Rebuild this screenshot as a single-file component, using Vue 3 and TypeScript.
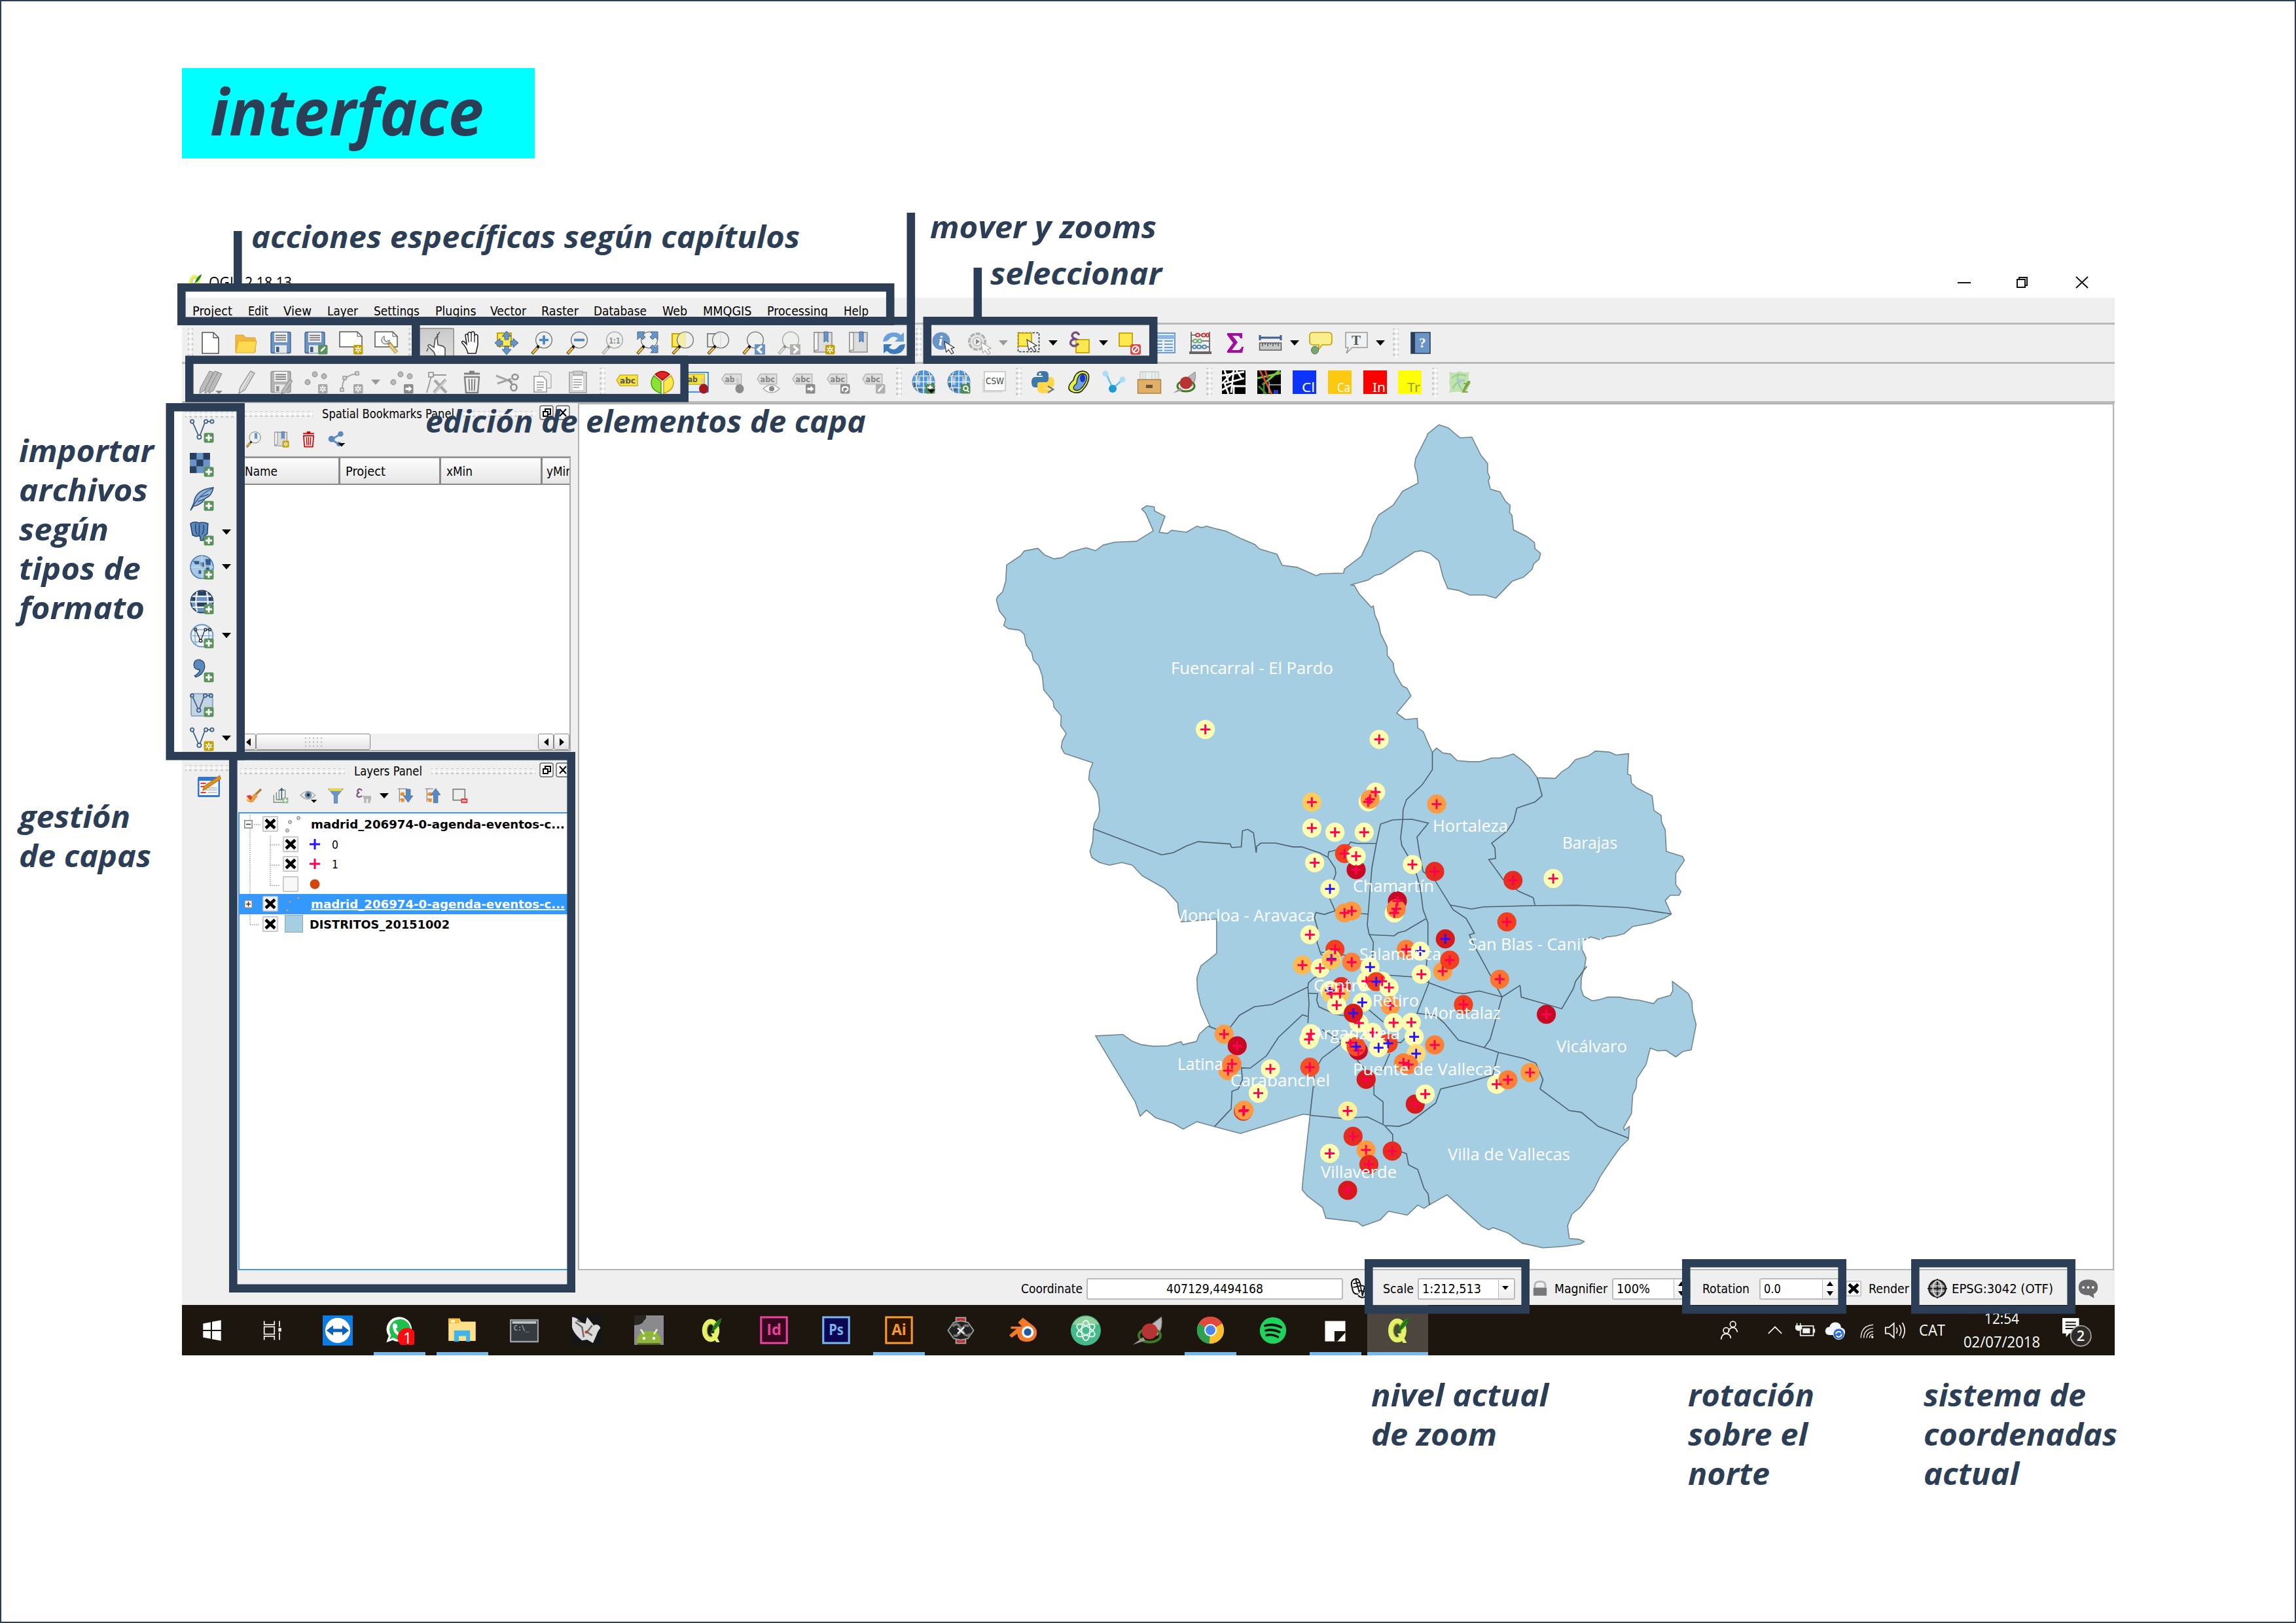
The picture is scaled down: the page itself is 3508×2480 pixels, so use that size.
<script setup lang="ts">
import { h } from 'vue'

/* Single line of text fitted to an exact width. */
interface FitProps { t: string; w: number; s?: number; c?: string; b?: boolean; f?: string; u?: boolean }
const Fit = (p: FitProps) => {
  const s = p.s ?? 19
  return h('svg', { width: p.w, height: s, style: 'display:block;overflow:visible;flex:none' }, [
    h('text', {
      x: 0, y: s * 0.865, 'font-size': s, fill: p.c ?? '#000', textLength: p.w, lengthAdjust: 'spacingAndGlyphs',
      'font-weight': p.b ? 700 : 400, 'text-decoration': p.u ? 'underline' : undefined,
      'font-family': p.f ?? '"DejaVu Sans Condensed","DejaVu Sans",sans-serif',
    }, p.t),
  ])
}
Fit.props = { t: String, w: Number, s: Number, c: String, b: Boolean, f: String, u: Boolean }

/* Check box, crossed when on. */
const Check = (p: { on?: boolean }) => h('svg', { width: 24, height: 24, viewBox: '0 0 24 24', style: 'display:block;flex:none' }, [
  h('rect', { x: 0.8, y: 0.8, width: 22.4, height: 22.4, rx: 1, fill: '#f8f8f8', stroke: '#bcbcbc', 'stroke-width': 1.5 }),
  p.on ? h('path', { d: 'M5 5.500L19 18.500M19 5.500L5 18.500', stroke: '#000', 'stroke-width': 4.6 }) : null,
])
Check.props = { on: Boolean }

/* Tree expander. */
const Expander = (p: { open?: boolean }) => h('svg', { width: 13, height: 13, viewBox: '0 0 13 13', style: 'display:block;flex:none;margin-right:15px' }, [
  h('rect', { x: 0.8, y: 0.8, width: 11.4, height: 11.4, fill: '#fff', stroke: '#888', 'stroke-width': 1.5 }),
  h('path', { d: p.open ? 'M3 6.500h7' : 'M3 6.500h7M6.500 3v7', stroke: '#333', 'stroke-width': 1.5 }),
])
Expander.props = { open: Boolean }

/* ---------- icons (36 x 36 grid) ---------- */
const badge = (fill: string, inner: string) => `<rect x="21" y="21" width="14.5" height="14.5" rx="2" fill="${fill}"/>${inner}`
const plus = badge('#5b925b', '<path d="M28.2 23.5v9.5M23.5 28.2h9.5" stroke="#fff" stroke-width="2.8"/>')
const star = (c = '#c4a000') => badge(c, '<path d="M28.2 23v10.5M23.7 25.6l9 5.2M32.7 25.6l-9 5.2" stroke="#fff" stroke-width="1.9"/><circle cx="28.2" cy="28.2" r="1.3" fill="' + c + '"/>')
const arrowBadge = badge('#8c8c8c', '<path d="M23.5 28.2h6" stroke="#fff" stroke-width="3.4"/><path d="M28.5 23.6l5 4.6-5 4.6z" fill="#fff"/>')
const mag = (gray = false, cx = 21) => `<path d="M${cx - 8} 23L3 34.5" stroke="${gray ? '#999' : '#333'}" stroke-width="4.4"/><path d="M${cx - 10} 25.5L3.6 33.7" stroke="${gray ? '#ddd' : '#fdbf2d'}" stroke-width="2.8"/><circle cx="${cx}" cy="13.5" r="12.4" fill="#eef0ee" fill-opacity=".88" stroke="${gray ? '#a5a5a5' : '#777'}" stroke-width="1.4"/><circle cx="${cx - 9}" cy="23.6" r="2" fill="${gray ? '#888' : '#111'}"/>`
const floppy = (a: string, b: string) => `<rect x="3" y="1.5" width="30" height="32" rx="2" fill="${a}" stroke="${b}" stroke-width="1.3"/><rect x="8" y="2" width="20" height="15" fill="#eee"/><path d="M10 6.5h16M10 10h16M10 13.5h16" stroke="#666" stroke-width="1.7"/><rect x="9" y="21.5" width="18" height="12" fill="#e8e8e8"/><rect x="11" y="24" width="4.5" height="8" fill="${b}"/>`
const cursor = (x: number, y: number, s = '#333') => `<path transform="translate(${x} ${y})" d="M0 0l2.6 16 3.7-3.6 4.4 6.4 3.2-2-3.8-6.2 4.8-1.5z" fill="#fff" stroke="${s}" stroke-width="1.2"/>`
const tag = (fill: string, st: string, tx: string, t = 'abc') => `<path d="M1 15L6.5 7H33v16.5H6.5z" fill="${fill}" stroke="${st}" stroke-width="1.5"/><text x="6" y="20" font-size="13" font-weight="700" fill="${tx}" font-family="DejaVu Sans Condensed,DejaVu Sans,sans-serif" textLength="${t === 'ab' ? 16 : 24}" lengthAdjust="spacingAndGlyphs">${t}</text>`
const grayTag = (t = 'abc') => `<g transform="translate(0 -1) scale(.93)">${tag('#dedede', '#b5b5b5', '#858585', t)}</g>`
const vee = (c: string, s = 1) => `<g transform="scale(${s})" fill="none" stroke="${c}" stroke-width="1.7"><path d="M4.5 6L13 25M15 25L22 6.500M26.500 4h5"/><circle cx="3.500" cy="4" r="2.600"/><circle cx="24" cy="4" r="2.600"/><circle cx="33" cy="4" r="2.600"/><circle cx="14" cy="27" r="3"/></g>`
const globe = `<circle cx="18" cy="17.500" r="17" fill="#5b9ddd"/><path d="M13 1h10v33H13z" fill="#3f8be0" opacity=".6"/><path d="M7 5h5v8H7zM24 5h5v8h-5zM3 19h6v7H3zM27 19h6v7h-6zM10 26h5v6h-5zM22 26h5v6h-5z" fill="#4c5763" opacity=".75"/><path d="M6 10h7v12H6zM23 10h7v12h-7z" fill="#dfe6ea" opacity=".6"/><circle cx="18" cy="17.500" r="17" fill="none" stroke="#3e78b5"/><path d="M1 17.500h34M4 8.500h28M4 26.500h28M18 0v35M10 2.500Q3 17 10 33M26 2.500Q33 17 26 33" fill="none" stroke="#e4edf5" stroke-width="1.500"/>`
const tile = (bg: string, t: string, tc = '#fff') => `<rect width="36" height="36" fill="${bg}"/><text x="14" y="33" font-size="20" fill="${tc}" font-family="Noto Sans,sans-serif" textLength="20" lengthAdjust="spacingAndGlyphs">${t}</text>`
const adobe = (bg: string, c: string, t: string) => `<rect x="1.500" y="1.500" width="33" height="33" fill="${bg}" stroke="${c}" stroke-width="2.600"/><text x="8.500" y="24" font-size="19" font-weight="700" fill="${c}" font-family="Open Sans,sans-serif" textLength="19" lengthAdjust="spacingAndGlyphs">${t}</text>`
const qgis = `<ellipse cx="17" cy="18" rx="9" ry="13" fill="none" stroke="#e6f06a" stroke-width="7"/><ellipse cx="17" cy="18" rx="5.500" ry="9.500" fill="none" stroke="#9fbf2c" stroke-width="1.300"/><path d="M17 22l8 13h5l-7-13z" fill="#e6f06a"/><path d="M33 0q-12 5-15 20 12-5 15-20z" fill="#2f8f1d"/><path d="M32 2L16 22" stroke="#14600d" stroke-width="1.500"/>`
const dots = '<g fill="#b9b9b9" stroke="#8f8f8f" stroke-width="1.200"><circle cx="16" cy="6" r="3.800"/><circle cx="30" cy="9" r="3.800"/><circle cx="5" cy="18" r="3.800"/></g>'
const trash = (c: string) => `<path d="M6 5h24M14 2h8" stroke="${c}" stroke-width="3"/><path d="M7 10h22l-2 24H9z" fill="none" stroke="${c}" stroke-width="2.400"/><path d="M13.500 13l.8 18M18 13v18M22.500 13l-.8 18" stroke="${c}" stroke-width="2"/>`
const book = '<path d="M4 2h27v30H4z" fill="#ddd" stroke="#8c8c8c" stroke-width="1.500"/><path d="M4 2h6v27q-5-1-6 3z" fill="#f5f5f5" stroke="#8c8c8c" stroke-width="1.300"/><path d="M19 1h6v16l-3-3-3 3z" fill="#6a94c5" stroke="#3f6a9e"/>'

const icons: Record<string, string> = {
  newdoc: '<path d="M5 2h17l8 8v24H5z" fill="#fff" stroke="#555" stroke-width="1.600"/><path d="M22 2v8h8" fill="none" stroke="#555" stroke-width="1.400"/>',
  folder: '<path d="M2 6h12l3 4h15v22H2z" fill="#f0b93e" stroke="#d59d23"/><path d="M6 15h28l-3 18H2z" fill="#fcd94f" stroke="#d9a62c"/>',
  save: floppy('#6a94c5', '#3b5c86'),
  saveas: `<g transform="translate(-2)">${floppy('#6a94c5', '#3b5c86')}</g>` + badge('#5b925b', '<path d="M24.500 31.500l1-3.500 5.500-4.500 1.500 1.500-5 5.500z" fill="#fff"/>'),
  composer: '<path d="M0 1h27l7 7v16H0z" fill="#fff" stroke="#555" stroke-width="1.500"/><path d="M27 1v7h7" fill="none" stroke="#555"/>' + star(),
  composers: '<path d="M0 1h27l7 7v16H0z" fill="#fff" stroke="#555" stroke-width="1.500"/><path d="M27 1v7h7" fill="none" stroke="#555"/><path d="M14 8a6 6 0 1 0 8 6l-5 2-3-3z" fill="#eee" stroke="#777" stroke-width="1.300"/><path d="M21 18l12 15" stroke="#a08a45" stroke-width="6"/><path d="M22 20l11 13" stroke="#e8cf80" stroke-width="3.600"/>',
  touch: '<path d="M23 1L18 9M19 4l1 6M3 31l2-5" stroke="#444" stroke-width="1.300"/><path d="M17 40l-3-8-9-9q0-3 3-2l6 4 2-14q2-2 3 0l1 10 4 1 4 1 3 3v14z" fill="#fff" stroke="#444" stroke-width="1.500"/>',
  hand: '<path d="M13 34q-2-9-9-16-1-4 3-2l4 4L9 6q1-3 4 0V3q3-3 5 0v-1q4-3 5 1v3q4-2 5 1v14l-3 13z" fill="#fff" stroke="#222" stroke-width="1.600"/><path d="M13 6l1 11M18 4v12M23 6v11" stroke="#222" stroke-width="1.300"/>',
  pansel: '<rect x="4" y="3" width="21" height="20" fill="#fce94f" stroke="#c4a000" stroke-width="2"/><path d="M18 0l7 8h-4v5h-6V8h-4zM18 36l7-8h-4v-5h-6v5h-4zM0 18l8-7v4h4v6H8v4zM36 18l-8-7v4h-4v6h4v4z" fill="#6a94c5" stroke="#3f6797"/>',
  zoomin: mag() + '<path d="M21 6.500v14M14 13.500h14" stroke="#4d86bf" stroke-width="3.600"/>',
  zoomout: mag() + '<path d="M13 13.500h16" stroke="#4d86bf" stroke-width="3.800"/>',
  zoom11: mag(true) + '<text x="12.500" y="18.500" font-size="13" font-weight="700" fill="#8b8b8b" font-family="DejaVu Sans,sans-serif" textLength="17" lengthAdjust="spacingAndGlyphs">1:1</text>',
  zoomfull: mag() + '<g fill="#6a94c5" stroke="#3f6797"><path d="M3 1h11l-3 4 4 4-4 4-4-4-4 4zM34 1H23l3 4-4 4 4 4 4-4 4 4zM34 33H23l3-4-4-4 4-4 4 4 4-4z"/></g>',
  zoomsel: '<rect x="2" y="4" width="20" height="20" fill="#fce94f" stroke="#c4a000" stroke-width="2"/>' + mag(false, 22) + '<path d="M12 6q4-4 10-5v23q-7-1-10-5z" fill="#fce94f" opacity=".4"/>',
  zoomlayer: '<rect x="2" y="4" width="20" height="20" fill="#eee" stroke="#888" stroke-width="2"/>' + mag(false, 22),
  zoomlast: mag() + '<rect x="20" y="20" width="16" height="16" fill="#6a94c5"/><path d="M31 22.500l-6 5.500 6 5.500" fill="none" stroke="#fff" stroke-width="3.400"/>',
  zoomnext: mag(true) + '<rect x="20" y="20" width="16" height="16" fill="#b0b0b0"/><path d="M25.500 22.500l6 5.500-6 5.500" fill="none" stroke="#fff" stroke-width="3.400"/>',
  bookadd: book + star(),
  book,
  refresh: '<path d="M1 16Q3 2 18 2q7 0 10 4l5-4v14H19l5-5q-8-6-14 2-2 3-9 3z" fill="#6ba0da"/><path d="M35 20q-2 15-17 15-7 0-11-5l-5 4V20h13l-5 5q8 7 15-2 2-3 10-3z" fill="#3f79bd"/>',
  info: '<circle cx="14" cy="15" r="13.500" fill="#6a94c5"/><text x="10" y="22" font-size="22" font-style="italic" font-weight="700" fill="#fff" font-family="Liberation Serif,serif">i</text>' + cursor(19, 16),
  action: '<circle cx="15" cy="16" r="12" fill="#ddd" stroke="#b0b0b0" stroke-width="4" stroke-dasharray="7 2"/><circle cx="15" cy="16" r="10.500" fill="#e6e6e6"/><circle cx="15" cy="16" r="6.500" fill="#f2f2f2" stroke="#999"/><path d="M13 12l6 4-6 4z" fill="#888"/>' + cursor(21, 17, '#aaa'),
  select: '<rect x="1.500" y="2.500" width="32" height="29" fill="none" stroke="#333" stroke-width="1.600" stroke-dasharray="3.500 2"/><rect x="2" y="3" width="20" height="20" fill="#fce94f" stroke="#c4a000" stroke-width="1.800"/>' + cursor(15, 13),
  expr: '<rect x="13" y="13" width="20" height="20" fill="#fce94f" stroke="#c4a000" stroke-width="1.800"/><path d="M18 6Q14-1 8 4q-3 5 4 8-9 1-7 8 5 6 12-1" fill="none" stroke="#75507b" stroke-width="3.400"/>',
  deselect: '<rect x="2" y="3" width="20" height="20" fill="#fce94f" stroke="#c4a000" stroke-width="1.800"/><rect x="19" y="20" width="16" height="16" rx="3" fill="#e04848"/><circle cx="27" cy="28" r="5" fill="none" stroke="#fff" stroke-width="2"/><path d="M23.500 32l7-8" stroke="#fff" stroke-width="2"/>',
  table: '<rect x="3" y="3" width="30" height="30" fill="#e8f1fa" stroke="#5d90c8" stroke-width="1.800"/><path d="M3 9h30" stroke="#8db8e4" stroke-width="6"/><path d="M6 15h8M17 15h13M6 20h8M17 20h13M6 25h8M17 25h13M6 29.500h8M17 29.500h13" stroke="#6b9bd0" stroke-width="2"/>',
  abacus: '<path d="M4 1v31M32 1v31M4 6h28M4 15h28M4 24h28" stroke="#555" stroke-width="1.600"/><path d="M1 31h34v4H1z" fill="#666"/><g fill="#fff" stroke-width="2"><g stroke="#cc3b3b"><ellipse cx="14" cy="6" rx="3" ry="2.600"/><ellipse cx="23" cy="6" rx="3" ry="2.600"/><ellipse cx="29" cy="6" rx="2" ry="2.600"/></g><g stroke="#6fae6f"><ellipse cx="10" cy="15" rx="3" ry="2.600"/><ellipse cx="17" cy="15" rx="3" ry="2.600"/></g><g stroke="#4f82b8"><ellipse cx="9" cy="24" rx="2.600" ry="2.600"/><ellipse cx="16" cy="24" rx="3" ry="2.600"/><ellipse cx="24" cy="24" rx="3" ry="2.600"/></g></g>',
  sigma: '<path d="M6 3h23v8h-3q-1-4-5-4h-7l8 10-9 12h9q5 0 6-5h3l-2 9H6v-3l9-12L6 6z" fill="#a40aa4"/>',
  measure: '<path d="M2 6v8M34 6v8M2 10h32" stroke="#3f5f8f" stroke-width="3"/><rect x="1.500" y="18" width="33" height="11" fill="#c8c8c8" stroke="#555" stroke-width="1.400"/><path d="M6 18v5M10 18v3M14 18v5M18 18v3M22 18v5M26 18v3M30 18v5" stroke="#444" stroke-width="1.300"/>',
  tip: '<path d="M6 2h24q5 0 5 5v9q0 5-5 5H20l-6 8 1-8H6q-5 0-5-5V7q0-5 5-5z" fill="#fbee8e" stroke="#c4a000" stroke-width="1.600"/><ellipse cx="9" cy="29" rx="5.500" ry="6" fill="#76a673" stroke="#4f7f4c"/>',
  anno: '<path d="M2 2h33v23H12L3 34l3-9H2z" fill="#eef2f5" stroke="#999" stroke-width="1.500"/><text x="11" y="21" font-size="21" font-weight="700" fill="#555" font-family="Liberation Serif,serif">T</text>',
  help: '<path d="M3 2h29v32H3z" fill="#6a94c5" stroke="#2b3d54" stroke-width="1.600"/><path d="M3 2h6v32H3z" fill="#2b3d54"/><text x="15" y="25" font-size="21" font-weight="700" fill="#fff" font-family="Liberation Serif,serif">?</text>',
  edits: '<g stroke="#8a8a8a" fill="#bbb"><path d="M16 1l6 2-14 28-7 4 1-8z"/><path d="M24 1l6 2-14 28-7 4 1-8z"/><path d="M29 3l6 2-13 26-7 4 1-8z"/></g><path d="M25 31h11l-5.500 5z" fill="#888"/>',
  edit: '<path d="M25 1l6 3-15 26-9 5 2-9z" fill="#e2e2e2" stroke="#9d9d9d" stroke-width="1.600"/><path d="M28 3L12 31" stroke="#aaa"/>',
  saveedit: floppy('#b4b4b4', '#8f8f8f') + '<path d="M32 14l4 2-12 18-5 2 1-6z" fill="#bbb" stroke="#888"/>',
  addpt: dots + star('#a8a8a8'),
  arc: '<path d="M4 28Q3 8 26 5" fill="none" stroke="#aaa" stroke-width="2"/><g fill="#ddd" stroke="#8f8f8f" stroke-width="1.300"><rect x="1" y="27" width="5" height="5"/><rect x="5" y="9" width="5" height="5"/><rect x="24" y="2" width="5" height="5"/></g>' + star('#a8a8a8'),
  movept: dots + arrowBadge,
  node: '<path d="M9 9L2 34M12 7h20" stroke="#999" stroke-width="1.800"/><rect x="5" y="3" width="7" height="7" fill="#eee" stroke="#8a8a8a" stroke-width="1.500"/><path d="M13 34L31 14M14 15l18 19" stroke="#a8a8a8" stroke-width="4.500"/><path d="M14 34L31 15" stroke="#ddd" stroke-width="1.500"/>',
  trash: trash('#828282'),
  cut: '<path d="M1 8l25 10M3 20l21-7" stroke="#a5a5a5" stroke-width="3"/><g fill="none" stroke="#929292" stroke-width="2.600"><ellipse cx="30" cy="10" rx="4.500" ry="4" /><ellipse cx="28" cy="26" rx="4.500" ry="5"/><path d="M20 14l6 8"/></g>',
  copy: '<path d="M13 2h13l5 5v20H13z" fill="#eee" stroke="#b5b5b5" stroke-width="1.500"/><path d="M5 9h13l6 6v18H5z" fill="#fff" stroke="#999" stroke-width="1.600"/><path d="M9 18h11M9 22h11M9 26h11M9 30h8" stroke="#b0b0b0" stroke-width="1.800"/>',
  paste: '<rect x="5" y="3" width="26" height="31" fill="#dedede" stroke="#a5a5a5" stroke-width="1.700"/><rect x="9" y="8" width="18" height="23" fill="#fff" stroke="#b5b5b5"/><rect x="11" y="1" width="14" height="6" fill="#ccc" stroke="#999"/><path d="M11 14h13M11 18h13M11 22h13M11 26h9" stroke="#999" stroke-width="1.600"/>',
  label: tag('#f7e33c', '#c9b024', '#555'),
  pie: '<g stroke-width="1.400"><path d="M18 15L7 6Q18-3 29 6z" fill="#e32424" stroke="#a40000"/><path d="M16 17v18Q0 30 1 17q1-5 4-9z" fill="#8ae234" stroke="#4e9a06"/><path d="M20 17v18q16-5 15-18-1-5-4-9z" fill="#fce94f" stroke="#c4a000"/></g>',
  pinned: '<rect x="-6" y="3" width="40" height="30" fill="#e3eefa" stroke="#1c78d8" stroke-width="1.600"/><g transform="translate(-3 -1) scale(.95)">' + tag('#f7e33c', '#c9b024', '#555', 'ab') + '</g><path d="M25 12v14" stroke="#d8c9b0" stroke-width="4"/><ellipse cx="27" cy="28" rx="7" ry="7.500" fill="#a4161a"/>',
  pin: grayTag('ab') + '<path d="M25 12v14" stroke="#ccc" stroke-width="4"/><ellipse cx="28" cy="28" rx="6.500" ry="7" fill="#8b8b8b"/>',
  eyetag: grayTag() + '<path d="M10 28q12-12 25 0-12 12-25 0z" fill="#fff" stroke="#aaa" stroke-width="1.500"/><circle cx="23" cy="28" r="4" fill="#888"/>',
  movetag: grayTag() + arrowBadge,
  rottag: grayTag() + badge('#8c8c8c', '<path d="M25 32q-3-6 3-7 6 0 4 5l-4 3" fill="none" stroke="#fff" stroke-width="2.300"/>'),
  edittag: grayTag() + badge('#b0b0b0', '<path d="M24 33l1-4 7-6 1 1-6 8z" fill="#fff"/>'),
  globeadd: globe + badge('#4f8a4f', '<path d="M28.200 22.500v6M24 26h8" stroke="#fff" stroke-width="2.400"/>') + '<path d="M24 29h12l-6 6z" fill="#000"/>',
  globefind: globe + badge('#4f8a4f', '<circle cx="28.500" cy="27.500" r="3.400" fill="none" stroke="#fff" stroke-width="2"/><path d="M30.500 30l3 3" stroke="#fff" stroke-width="2"/>'),
  csw: '<rect x="1" y="14" width="28" height="19" fill="#e8e8e8" stroke="#ccc"/><rect x="3" y="2" width="32" height="29" fill="#fff" stroke="#bbb" stroke-width="1.300"/><text x="5" y="21" font-size="14" fill="#444" font-family="DejaVu Sans Condensed,DejaVu Sans,sans-serif" textLength="28" lengthAdjust="spacingAndGlyphs">CSW</text>',
  python: '<path d="M17 1q9-1 9 6v8q0 3-4 3h-9q-4 0-4 5v3H5q-5-1-5-8 0-8 6-8h11V8H8V6q0-5 9-5z" fill="#3c78a9"/><path d="M19 35q-10 0-10-6v-8q0-3 4-3h9q4 0 4-5V10h4q5 1 5 8 0 9-6 9H18v1h9v2q0 5-8 5z" fill="#ffd54a"/><circle cx="13" cy="5.500" r="1.700" fill="#fff"/><path d="M25 24l8 5-8 5" fill="none" stroke="#777" stroke-width="2.600"/>',
  contour: '<path d="M24 1q12 1 9 14-2 8-8 14-4 6-13 5-10-2-9-9 1-5 7-10Q13 2 24 1z" fill="#dff53c" stroke="#222" stroke-width="1.600"/><path d="M25 5q7 1 5 10-4 10-10 14-5 3-9 0-3-4 4-9Q16 5 25 5z" fill="#6f9fe0" stroke="#222" stroke-width="1.300"/><ellipse cx="24" cy="12" rx="4" ry="6" fill="#1d33c8"/>',
  share3: '<path d="M6 5l10 22M30 15L16 28" stroke="#6cc5ee" stroke-width="2.600"/><circle cx="5" cy="5" r="4.500" fill="#a9def5"/><circle cx="31" cy="14" r="4.500" fill="#a9def5"/><circle cx="16" cy="28" r="6" fill="#1b9ad6"/>',
  drawer: '<path d="M4 2h28v14H4z" fill="#e9eeee" stroke="#b5b5b5"/><path d="M22 3v12M27 3v12M8 3v12M12 3v12" stroke="#cfd6d6" stroke-width="1.500"/><rect x=".500" y="14" width="35" height="21" fill="#e0b068" stroke="#a9803f" stroke-width="1.400"/><rect x="13" y="22" width="10" height="5" fill="#6a5430"/>',
  kite: '<path d="M34 2q2 14-5 22L18 14z" fill="#b9b9b9" stroke="#888"/><ellipse cx="20" cy="24" rx="13" ry="8" fill="none" stroke="#3d7a20" stroke-width="3"/><circle cx="20" cy="19" r="9.500" fill="#b83434"/><path d="M0 35l12-9 3 4z" fill="#999"/>',
  grassA: '<rect width="36" height="36" fill="#000"/><path d="M0 8L34 2M4 0l6 18M34 12L4 20 10 36M18 0l-4 34M22 0l8 12M0 20l18-18M0 30l14-8M18 22v14M18 24h18" stroke="#fff" stroke-width="2.800"/>',
  grassB: '<rect width="36" height="36" fill="#000"/><path d="M0 12L36 4M34 0L8 22" stroke="#78c83c" stroke-width="3"/><path d="M4 0l18 36M12 0l4 12" stroke="#e04820" stroke-width="2.800"/><path d="M2 24l12 12M10 18v18" stroke="#3d8f2c" stroke-width="2.600"/><path d="M18 17v18M18 22h18" stroke="#bbb" stroke-width="1.500"/><path d="M25 30h7v6h-7z" fill="#2738c8"/>',
  cl: tile('#0c33ff', 'Cl'), ca: tile('#fcc810', 'Ca'), in: tile('#fb0200', 'In'), tr: tile('#fdff00', 'Tr', '#9a9a1c'),
  landmap: '<path d="M2 2q10 3 16-1 8 4 15 1-3 12 1 18l-6 14q-14-3-26 0 3-10 0-16 2-8 0-16z" fill="#c2e2b2"/><path d="M6 12q8-8 22-4M8 28q4-12 18-13M16 4q-4 14 6 26" fill="none" stroke="#9bcf94" stroke-width="2.400"/><path d="M16 14q4-3 6 2l-4 7z" fill="#a7c8e8"/><path d="M35 16L25 34l-3-2 8-15z" fill="#5e9b46"/><path d="M24 20l9 0-10 13h8" fill="none" stroke="#8cae3c" stroke-width="2"/>',
  vadd: vee('#3e6084') + plus,
  raster: '<path d="M0 0h30v30H0z" fill="#6a94c5"/><path d="M0 0h10v10H0zM20 0h10v10H20zM10 10h10v10H10zM0 20h10v10H0z" fill="#27405f"/>' + plus,
  feather: '<path d="M35 1Q8 4 6 24l-5 11 4-6q12-2 18-12 10-4 12-16z" fill="#8fb3d9" stroke="#2f4f74" stroke-width="1.500"/><path d="M2 34Q12 12 34 2M12 22l10-4M16 15l12-4" fill="none" stroke="#2f4f74" stroke-width="1.200"/>' + plus,
  elephant: '<path d="M1 3q6-4 12-1 7-2 14 1l-1 15-4 3-2 7h-4l-1-7-6 1-5-2z" fill="#5b88bd" stroke="#27496f" stroke-width="1.600"/><path d="M9 3q-2 9 2 16M14 4v16M20 5q2 8-2 14" stroke="#27496f" fill="none" stroke-width="1.500"/>' + plus,
  wms: '<circle cx="18" cy="17" r="17" fill="#a9c7e6" stroke="#4a7bb0" stroke-width="1.600"/><path d="M5 8h9v5H8zM16 10h5v8h-4zM23 5h8v9h-7zM24 16h5v6h-5zM13 22h4v5h-4z" fill="#355d8a"/><path d="M1 17h34M18 0v34" stroke="#cfe0f1"/>' + plus,
  wcs: '<circle cx="18" cy="17" r="16.500" fill="#6a94c5" stroke="#27405f" stroke-width="1.800"/><path d="M12 2h12v6H12zM4 10h6v6H3zM26 10h6l1 6h-7zM11 18h14v7H11z" fill="#27405f"/><path d="M1 17h34M4 9h28M4 25h28M11 2q-4 15 0 30M25 2q4 15 0 30" fill="none" stroke="#fff" stroke-width="1.900"/>' + plus,
  wfs: '<circle cx="18" cy="17" r="16.500" fill="#edf3f9" stroke="#6a94c5" stroke-width="1.800"/><path d="M1 17h34M4 8h28M4 26h28M10 2q-5 15 0 30M26 2q5 15 0 30" fill="none" stroke="#8db3dc" stroke-width="1.600"/><g transform="translate(6 5)">' + vee('#222', 0.72) + '</g>' + plus,
  comma: '<path d="M6 9q1-8 9-7 8 2 7 12-2 10-13 14l-2-2q7-4 8-9-9 0-9-8z" fill="#5b88bd" stroke="#27496f" stroke-width="1.300"/>' + plus,
  virtual: '<rect x="2" y="1" width="32" height="33" rx="2" fill="#c3d3e4" stroke="#7d99b8" stroke-width="1.500"/>' + vee('#3e6084', 0.95) + plus,
  vnew: vee('#3e6084') + star(),
  form: '<rect x=".500" y="3" width="34" height="31" rx="2" fill="#2f76d8"/><rect x="3" y="9" width="29" height="22" fill="#f5f7fa"/><path d="M5 13h8M5 18h8M5 27h8" stroke="#e33" stroke-width="2.200"/><path d="M16 20h14M10 23h20M16 27h14" stroke="#bbb" stroke-width="1.600"/><path d="M34 1L11 17l-3 7 6-3L36 6z" fill="#e08f1c" stroke="#b56c0c"/>',
  zoombk: mag() + '<path d="M20 4h6v14l-3-3-3 3z" fill="#6a94c5"/>',
  redtrash: trash('#d40000'),
  share: '<path d="M28 6L8 18l18 12" fill="none" stroke="#5b88bd" stroke-width="4"/><circle cx="28" cy="6" r="6" fill="#5b88bd"/><circle cx="8" cy="17" r="7" fill="#5b88bd"/><circle cx="24" cy="28" r="5" fill="#5b88bd"/><path d="M22 26h16l-8 8z" fill="#000"/>',
  brush: '<path d="M36 3L20 18" stroke="#b07a2a" stroke-width="5"/><path d="M22 12l6 7-10 13Q10 36 2 28z" fill="#e0a050"/><path d="M2 18l9-2 5 6-5 7z" fill="#e33a3a"/><path d="M3 20l8 8-6 2z" fill="#f0d040"/>',
  group: '<g fill="none" stroke="#7a8a7a" stroke-width="2"><path d="M2 16v17h20M8 10v17h18M14 5h14v22H14z"/></g><path d="M20 2v24M16 6l4-5 4 5" stroke="#3e6084" stroke-width="2.400" fill="none"/>' + '<rect x="22" y="22" width="13" height="13" fill="#8fba8f"/><path d="M28.500 24v9M24 28.500h9" stroke="#fff" stroke-width="2.200"/>',
  eye: '<path d="M0 17Q17-2 34 17 17 34 0 17z" fill="#e8e8e4" stroke="#999" stroke-width="1.800"/><circle cx="18" cy="16" r="8" fill="#6a8fb4"/><circle cx="18" cy="16" r="3.500" fill="#1c2c3c"/><path d="M24 27h14l-7 7z" fill="#000"/>',
  funnel: '<path d="M1 2h34L22 18v17h-8V18z" fill="#6a94c5" stroke="#4a6f9c"/><path d="M2 1h32l-3 6H5z" fill="#e8d83c"/>',
  epsf: '<path d="M15 6Q11 0 6 4q-3 5 3 7-7 1-5 8 5 4 11-1" fill="none" stroke="#75507b" stroke-width="3.200"/><path d="M16 18h20v8l-3 9h-4V25h-4v10h-5v-9z" fill="#b5b5b5"/>',
  expand: '<path d="M1 2h22M5 2v30M5 14h8M5 26h8" stroke="#888" stroke-width="1.800"/><path d="M8 10h8v8H8zM8 24h8v8H8z" fill="#f58a1f"/><path d="M20 3h10v15h6L25 33 14 18h6z" fill="#5b88bd" stroke="#3b618f"/>',
  collapse: '<path d="M1 2h18M5 2v30M5 14h8M5 26h8" stroke="#888" stroke-width="1.800"/><path d="M8 10h8v8H8zM8 24h8v8H8z" fill="#f58a1f"/><path d="M20 34h10V16h6L25 1 14 16h6z" fill="#5b88bd" stroke="#3b618f"/>',
  remove: '<rect x="2" y="3" width="27" height="25" fill="#eee" stroke="#777" stroke-width="2.400"/><rect x="20" y="24" width="15" height="11" rx="2" fill="#e0444c"/><path d="M23 29.500h9" stroke="#fff" stroke-width="2.600"/>',
  /* taskbar */
  win: '<path d="M5 8l11-2v11H5zM18 5.500L31 3v14H18zM5 19h11v11L5 28zM18 19h13v14l-13-2.500z" fill="#fff"/>',
  taskview: '<path d="M6 5v5h14V5M6 31v-5h14v5M6 13h14v10H6zM27 5v8M27 21v10" fill="none" stroke="#eee" stroke-width="1.600"/><rect x="25.500" y="14.500" width="4" height="5" fill="#eee"/>',
  teamviewer: '<rect width="36" height="36" fill="#0b7de3"/><circle cx="18" cy="18" r="15" fill="#fff"/><path d="M4.500 18l8-6v4h11v-4l8 6-8 6v-4h-11v4z" fill="#0a63b8"/>',
  whatsapp: '<path d="M17 1a16 15.500 0 1 1-8 29l-8 3 3-8A16 15.500 0 0 1 17 1z" fill="#fff"/><path d="M17 4a13 13 0 1 1-7 23l-5 2 2-5A13 13 0 0 1 17 4z" fill="#1fbf4c"/><path d="M11 9q4 0 4 5l-2 2q2 5 7 7l2-2q3 0 5 3-2 4-6 3Q9 23 9 12q0-2 2-3z" fill="#fff"/><circle cx="27" cy="27" r="12" fill="#fb0a12"/><text x="22" y="34" font-size="19" fill="#fff" font-family="Open Sans,sans-serif">1</text>',
  explorer: '<path d="M1 3h14l2 4h18v24H1z" fill="#ffe08a"/><path d="M1 3h14v6H1z" fill="#fbc02d"/><rect x="4" y="5" width="5" height="3" fill="#fff"/><path d="M8 32V18h20v14h-5v-7h-9v7z" fill="#3db5e6"/>',
  cmd: '<rect x=".800" y="5" width="34.500" height="27" fill="#353a3e" stroke="#9aa0a4" stroke-width="2"/><rect x="3" y="6.500" width="30" height="3" fill="#c3c7ca"/><text x="5" y="18" font-size="8" fill="#c4c8cc" font-family="DejaVu Sans Mono,monospace">C:\\_</text>',
  rhino: '<rect width="36" height="36" fill="#161616"/><path d="M0 2q6 0 10 6l6 2 2-8 8 10q5-3 8 3-3 3-5 9l-4 9-7-4-6 1Q2 22 0 14z" fill="#dcdcdc"/><path d="M4 8l8 6 2 12M24 12l-6 8 6 4M10 8l-4-2" fill="none" stroke="#6b6b6b" stroke-width="2"/><circle cx="17" cy="20" r="1.800" fill="#c33"/>',
  android: '<rect width="36" height="36" fill="#8a8a8e"/><path d="M0 0h14q2 4-2 6-2 6-12 6z" fill="#2a2622"/><path d="M3 34q0-15 15-15t15 15z" fill="#8fb53a"/><path d="M8 17l4 6M28 17l-4 6" stroke="#e4f0c4" stroke-width="2.200"/><path d="M4 34h28v2H4z" fill="#4a6320"/><circle cx="12" cy="28" r="1.800" fill="#fff"/><circle cx="24" cy="28" r="1.800" fill="#fff"/>',
  qgis,
  id: adobe('#36071e', '#e8419b', 'Id'), ps: adobe('#0c0752', '#78b3ee', 'Ps'), ai: adobe('#2c1300', '#f39a28', 'Ai'),
  seq: '<path d="M12 2h12v7H12zM12 27h12v7H12z" fill="#c8282c" stroke="#aaa" stroke-width="1.500"/><path d="M9 8l9-2 9 2 7 10-7 10-9 2-9-2-7-10z" fill="#222" stroke="#999" stroke-width="1.600"/><path d="M8 13q3-4 7-2l8 12q4 3 7-1M9 24q4 2 7-2l5-8q3-4 7-1" stroke="#777" stroke-width="3" fill="none"/><path d="M14 15l8 7M22 14l-8 8" stroke="#eee" stroke-width="2"/>',
  blender: '<path d="M17 2l13 10q6 5 4 12-3 9-14 8-9-1-10-10l-7 5-3-3 9-8H2v-3h14l-5-5z" fill="#f5792a"/><circle cx="23" cy="20" r="7.500" fill="#fff"/><circle cx="23" cy="20" r="4.600" fill="#1d5ba4"/>',
  atom: '<circle cx="18" cy="18" r="18" fill="#46b98a"/><path d="M2 11a18 18 0 0 1 32 0z" fill="#8ed19b"/><g fill="none" stroke="#e7fff2" stroke-width="1.500"><ellipse cx="18" cy="18" rx="5" ry="12"/><ellipse cx="18" cy="18" rx="5" ry="12" transform="rotate(60 18 18)"/><ellipse cx="18" cy="18" rx="5" ry="12" transform="rotate(-60 18 18)"/></g>',
  chrome: '<circle cx="18" cy="18" r="16.500" fill="#fbc02d"/><path d="M18 18L3.700 9.700a16.500 16.500 0 0 1 28.600 0z" fill="#e04a3c"/><path d="M18 18L3.700 9.700A16.500 16.500 0 0 0 16.500 34.500z" fill="#2ea150"/><circle cx="18" cy="18" r="7.600" fill="#fff"/><circle cx="18" cy="18" r="6" fill="#4a87ee"/>',
  spotify: '<circle cx="18" cy="18" r="16.500" fill="#1ed35e"/><path d="M8 12q11-3 20 2M9 18q9-2 17 2M10 24q7-2 14 2" fill="none" stroke="#14120c" stroke-width="3" stroke-linecap="round"/>',
  note: '<path d="M4 5h28v28H4z" fill="#fff"/><path d="M17 31V19h15v2L21 33h-4z" fill="#1b150c"/><path d="M20 31l9-11" stroke="#1b150c"/>',
  people: '<g fill="none" stroke="#f2f2f2" stroke-width="2"><circle cx="24" cy="7" r="5"/><path d="M16 20q2-7 8-7t8 8"/><circle cx="12" cy="18" r="5"/><path d="M3 34q1-10 9-10t8 8"/></g>',
  caret: '<path d="M5 24l13-13 13 13" fill="none" stroke="#f2f2f2" stroke-width="2.200"/>',
  battery: '<path d="M3 5v6M9 5v6M1 10h10v5q-2 3-5 3t-5-3z" stroke="#f2f2f2" stroke-width="1.800" fill="#f2f2f2"/><rect x="9" y="10" width="23" height="17" fill="none" stroke="#f2f2f2" stroke-width="2"/><rect x="13" y="14" width="13" height="9" fill="#f2f2f2"/><path d="M32 15h3v7h-3z" fill="#f2f2f2"/>',
  cloud: '<path d="M8 26Q0 25 1 18q1-6 7-6 3-9 11-8 9 1 9 9 7 2 7 8 0 5-6 5z" fill="#f4f6fa"/><circle cx="24" cy="24" r="9.500" fill="#2e6fd0" stroke="#fff"/><path d="M19 24a5 5 0 0 1 9-2M29 24a5 5 0 0 1-9 3" fill="none" stroke="#fff" stroke-width="2"/>',
  wifi: '<g fill="none" stroke="#ddd" stroke-width="2"><path d="M6 34Q6 8 32 6M12 34q0-19 20-21M18 34q0-13 14-14M24 34q0-7 8-8"/></g><circle cx="30" cy="32" r="2.500" fill="#fff"/>',
  sound: '<path d="M2 13h6l8-7v24l-8-7H2z" fill="none" stroke="#f2f2f2" stroke-width="2"/><path d="M20 13q3 5 0 10M25 9q6 9 0 18M30 5q8 13 0 26" fill="none" stroke="#f2f2f2" stroke-width="1.800"/>',
  notif: '<path d="M0 1h27v25H11l-5 6v-6H0z" fill="#fff"/><path d="M5 8h17M5 13h17M5 18h17" stroke="#1b150c" stroke-width="2.200"/><circle cx="30" cy="30" r="16.500" fill="#2f2b28" stroke="#aaa" stroke-width="1.800"/><text x="23" y="38" font-size="23" font-weight="600" fill="#fff" font-family="Open Sans,sans-serif">2</text>',
  mouse: '<path d="M10 3q7-3 9 6l2 9q1 9-6 9T7 20L5 11q0-6 5-8z" fill="#fff" stroke="#111" stroke-width="2.200"/><path d="M18 14q8-3 11 5t-2 12-11-2" fill="#fff" stroke="#111" stroke-width="2.200"/><path d="M8 10l10-2M12 3l6 22M8 16l10-2M17 21l12 2M20 15l3 15M26 16l-3 14" stroke="#111" stroke-width="2"/>',
  crs: '<circle cx="18" cy="18" r="15" fill="#8a8a8a" stroke="#222" stroke-width="3.500"/><path d="M18 0v36M0 18h36" stroke="#222" stroke-width="2.600"/><ellipse cx="18" cy="18" rx="8" ry="14" fill="none" stroke="#dedede" stroke-width="2"/><path d="M5 13h26M5 23h26" stroke="#dedede" stroke-width="1.600"/>',
  bubble: '<path d="M18 3q16 0 16 13 0 8-7 11l1 7-9-5Q2 29 2 16 2 3 18 3z" fill="#6b6b6b"/><circle cx="10" cy="16" r="2" fill="#fff"/><circle cx="18" cy="16" r="2" fill="#fff"/><circle cx="26" cy="16" r="2" fill="#fff"/>',
  lock: '<path d="M7 16V10q0-7 11-7t11 7v6" fill="none" stroke="#b5b5b5" stroke-width="4"/><rect x="4" y="16" width="28" height="17" fill="#777"/>',
}

/* "|" grip, "v" menu arrow, "x" disabled menu arrow */
const row1 = 'newdoc folder save saveas composer composers | touch hand pansel zoomin zoomout zoom11 zoomfull zoomsel zoomlayer zoomlast zoomnext bookadd book refresh | info action x select v expr v deselect table abacus sigma measure v tip anno v | help'.split(' ')
const row2 = 'edits edit saveedit addpt arc x movept node trash cut copy paste | label pie pinned pin eyetag movetag rottag edittag | globeadd globefind csw | python contour share3 drawer kite | grassA grassB cl ca in tr | landmap'.split(' ')
const side: [string, boolean][] = [['vadd', false], ['raster', false], ['feather', false], ['elephant', true], ['wms', true], ['wcs', false], ['wfs', true], ['comma', false], ['virtual', false], ['vnew', true]]

/* label, text width, distance to next label */
const menu: [string, number, number][] = [['Project', 61, 24], ['Edit', 31, 23], ['View', 43, 24], ['Layer', 47, 24], ['Settings', 70, 23.5], ['Plugins', 62.5, 22], ['Vector', 55, 23], ['Raster', 57, 23], ['Database', 81, 24], ['Web', 38, 23.5], ['MMQGIS', 74.5, 24], ['Processing', 93, 24], ['Help', 38, 0]]

const tasks: [string, number][] = [['teamviewer', 46], ['whatsapp', 44], ['explorer', 44], ['cmd', 44], ['rhino', 46], ['android', 45], ['qgis', 38], ['id', 43], ['ps', 43], ['ai', 43], ['seq', 44], ['blender', 44], ['atom', 46], ['kite', 46], ['chrome', 45], ['spotify', 44], ['note', 40], ['qgis', 40]]
const running = new Set([1, 2, 9, 14, 16, 17])

/* ---------- map ---------- */
const sheets: Record<string, [number, number, number, number]> = {
  A: [1480, 620, 2.24, 2.24], B: [2080, 620, 2.9037, 1.96], C: [1840, 1180, 3, 3], D: [1640, 1380, 1.568, 2.8], P: [0, 0, 1, 1],
}
const at = (s: string, x: number, y: number): [number, number] => {
  const [ox, oy, sx, sy] = sheets[s]
  return [Math.round((ox + x / sx) * 10) / 10, Math.round((oy + y / sy) * 10) / 10]
}
const line = (src: string) => {
  let s = 'P'
  const out: string[] = []
  for (const tok of src.trim().split(/\s+/)) {
    if (tok in sheets) { s = tok; continue }
    const [x, y] = tok.split(',').map(Number)
    out.push(at(s, x, y).join(','))
  }
  return out.join(' ')
}
const outline = line(`A 427,1448 430,1430 443,1408 448,1385 445,1345 439,1322 411,1280 414,1250 425,1222 370,1204 328,1190 317,1170 320,1148 334,1122 315,1095 317,1062 292,1032 289,1012 257,972 252,925 240,890 221,870 216,845 197,818 190,782 175,768 136,763 120,752 127,730 105,703 95,665 98,655 116,637 127,600 130,545 178,513 190,497 237,488 260,511 292,524 320,520 350,500 402,486 435,496 460,477 500,467 574,464 632,428 606,368 592,353 610,342 635,346 636,360 672,378 652,433 680,437 695,426 745,433 782,412 797,417 814,412 850,422 880,429 935,456 980,475 995,490 1055,508 1073,546 1125,553 1190,582 1205,575 1283,573 1286,559 1344,515 1372,455 1382,415 1403,374 1453,340 1485,293 1538,265 1535,235 1526,205 1530,180 1568,105
B 294,84 344,57 385,66 438,96 490,94 530,148 560,173 560,200 570,215 563,225 573,250 615,258 640,287 660,298 657,320 668,328 675,372 735,392 768,410 770,428 795,442 788,460 765,473 757,490 720,513 670,525 597,576 550,567 480,567 430,553 383,547 362,512 344,465 305,442 265,434 235,438 90,503 60,508 30,522
A 1344,603 1307,613 1320,615 1337,645 1378,690 1385,685 1390,715 1403,745 1410,780 1432,825 1433,855 1453,880 1457,912 1483,958 1500,967 1514,993 1465,1052 1495,1074 1535,1070 1537,1103 1556,1115 1568,1145
B 315,1038 333,1025 362,1040 395,1043 425,1063 480,1066 525,1066 580,1055 615,1055 675,1043 720,1066 748,1083 780,1114 860,1116 890,1096 920,1083 950,1060 1010,1048 1038,1034 1100,1037 1130,1046 1186,1042 1181,1103 1195,1107 1198,1130 1220,1144 1290,1168 1298,1212 1330,1227 1332,1247 1348,1270 1353,1335 1425,1350 1433,1362 1395,1400 1395,1435 1418,1455 1410,1466 1370,1466 1348,1482 1375,1522
D 1432,48 1415,65 1385,85 1340,100 1320,130 1300,140 1277,145 1262,157 1240,145 1222,160 1218,195 1228,235 1225,270 1217,320 1216,365 1222,397 1243,418 1263,412 1280,402 1308,402 1335,412 1355,415 1390,430 1400,410 1430,395 1436,375 1435,335 1473,387 1482,420 1483,460 1492,520 1480,628 1460,635 1443,658 1420,630 1400,632 1382,620 1372,690 1350,750 1348,790 1340,820 1337,900 1318,960 1320,972 1332,955 1330,1010 1310,1045 1290,1095 1262,1170 1247,1225 1215,1300 1195,1330 1184,1380 1188,1435 1210,1438 1224,1448 1215,1458 1180,1468 1125,1475 1075,1455 1042,1412 1005,1388 995,1398 978,1382 895,1248 852,1292 840,1306 825,1292 800,1335 755,1318 735,1355 693,1382 680,1364 605,1348 597,1302 560,1252 548,1226 550,1180 567,906 550,903 400,986 338,956 296,935 263,967 240,943 197,918 175,885 160,912 148,850 53,568 118,562 140,590 163,606 190,612 225,611 258,592 262,606 295,592 302,560 320,530 327,525 305,435 297,370 296,320 305,270 343,215 343,68 258,80 252,40 250,0
P 1780,1358 1745,1338 1730,1322 1714,1318 1695,1322 1680,1318 1668,1310 A 415,1525 425,1490`)
const borders = [
  'A 427,1448 660,1537 700,1530 745,1507 785,1492 895,1500 900,1512 933,1510 937,1455 955,1450 975,1462 984,1530 986,1508 1000,1497 1050,1497 1110,1510 1140,1510 1200,1530 C 567,390 600,440 603,465 590,500 575,580 600,635 550,652 512,643 505,665 520,720 517,780 535,835 575,860 575,905 500,945 478,965 475,985 310,1065 230,1075 160,1115 120,1168 60,1180 20,1165',
  'C 567,390 570,365 600,358 665,330 670,320 700,326 788,326', 'C 770,870 775,780 755,740 747,700 755,600 768,440 788,330 808,238 865,218 950,215 1027,233 975,297 985,360 1003,455 1060,500 1125,605 1140,630 1200,670 1238,738 1215,745 1240,800 1300,910 1365,1030',
  'B 315,1038 315,1090 270,1135 200,1180 185,1210 C 910,215 900,300 905,335 955,420 975,475 990,530 1003,630 1025,690 1025,800 1018,890 1030,965',
  'C 1125,608 1225,627 1280,617 B 770,1497 960,1496 1180,1503 1375,1522', 'B 780,1114 802,1168 770,1187 690,1205 675,1245 645,1275 578,1310 593,1325 595,1356 565,1359 630,1420 700,1455 762,1473 770,1495',
  'C 755,745 870,750 890,735 920,728 1015,672', 'C 600,635 720,648 750,650', 'C 535,825 640,838 700,850', 'C 840,930 955,938 1030,965', 'C 1030,965 1150,1010 1190,1015 1260,1003 1365,1030 1310,1225 1283,1262', 'D 1025,400 1028,400 1070,352',
  'C 1030,965 975,1105 1060,1115 1100,1150 1165,1228 1283,1262 1350,1285 D 1080,665 1108,685 1125,755 1118,795 1188,888 1217,895 1257,955 1330,1005',
  'C 475,985 480,1060 475,1150', 'C 475,1013 520,1015 515,1045 525,1075 600,1110 640,1115 680,1105', 'C 475,1120 450,1112 340,1215 285,1300 210,1357 170,1355 D 405,755 395,795 380,805 378,880 338,956',
  'C 755,1090 820,1145', 'C 540,1180 580,1205 630,1235 620,1250 540,1310 505,1370 505,1440 D 575,780 567,906', 'C 700,1320 745,1370 D 720,740 720,820 742,850 742,945', 'C 850,1290 820,1360 790,1370', 'C 870,1235 900,1240 930,1210',
  'D 568,908 640,920 705,915 745,950 765,990 765,1050 798,1072 803,1120 825,1140 840,1220 850,1245 853,1292', 'D 748,952 780,955 805,940 868,855 880,795 940,770 1005,735 1018,640', 'D 1070,352 1073,402 1170,452 1198,365 1203,335 1230,270',
].map(line)

const Y = '#ffffb2', G = '#fecc5c', O = '#fd9b43', T = '#fd8038', F = '#f54f28', H = '#f2401f', R = '#e62b20', S = '#d7191c', K = '#c70a24'
type Pt = [string, number, number, string, string?]
/* p: pink cross, b: blue cross */
const pts: Pt[] = [
  ['A', 810, 1108, Y], ['A', 1405, 1142, Y], ['C', 493, 137, G], ['C', 785, 91, Y], ['C', 751, 136, Y], ['C', 760, 124, O], ['C', 493, 256, Y], ['C', 599, 275, Y], ['C', 733, 275, Y],
  ['C', 1065, 146, O], ['C', 643, 373, H], ['C', 696, 447, K], ['C', 696, 385, Y], ['C', 506, 415, Y], ['C', 576, 535, Y, 'b'], ['C', 954, 423, Y], ['C', 1056, 455, R], ['C', 1415, 496, R],
  ['B', 851, 1416, Y], ['C', 643, 645, O], ['C', 676, 636, O], ['C', 885, 590, K], ['C', 871, 645, Y], ['C', 880, 626, T], ['C', 1387, 686, H], ['C', 484, 745, Y], ['C', 599, 812, H],
  ['C', 1105, 764, S, 'b'], ['C', 926, 812, T], ['C', 990, 820, Y, 'b'], ['C', 1093, 912, O], ['C', 1125, 861, H], ['C', 450, 884, '#feb94f'], ['C', 531, 898, Y], ['C', 583, 856, Y, 'b'], ['C', 582, 861, '#fec357'],
  ['C', 676, 871, T], ['C', 760, 893, Y, 'b'], ['C', 995, 926, Y], ['C', 1354, 949, '#fb7433'], ['C', 743, 958, Y], ['C', 815, 958, Y], ['C', 628, 983, R], ['C', 575, 1000, Y, 'b'], ['C', 583, 1015, G], ['C', 622, 1015, '#fec357'],
  ['C', 607, 1068, Y], ['C', 788, 960, H, 'b'], ['C', 847, 987, Y], ['C', 853, 1070, O], ['C', 724, 1055, Y, 'b'], ['C', 709, 1150, Y], ['C', 683, 1105, S, 'b'], ['C', 1188, 1065, H], ['C', 868, 1148, Y], ['C', 949, 1147, Y],
  ['C', 772, 1193, Y], ['C', 962, 1213, Y, 'b'], ['C', 489, 1199, Y], ['C', 480, 1225, Y], ['C', 91, 1201, O], ['C', 151, 1254, K], ['C', 109, 1368, O], ['C', 127, 1337, T], ['C', 303, 1360, Y], ['C', 484, 1352, F],
  ['C', 670, 1240, Y], ['C', 706, 1276, K], ['C', 696, 1258, F, 'b'], ['C', 843, 1243, H, 'b'], ['C', 799, 1263, Y, 'b'], ['C', 1056, 1250, T], ['C', 971, 1290, '#fed976', 'b'], ['C', 937, 1340, T], ['C', 913, 1332, T],
  ['C', 742, 1408, S], ['D', 1133, 476, K], ['D', 1014, 775, Y], ['D', 1041, 756, T], ['D', 1094, 725, O], ['D', 443, 813, Y], ['D', 407, 890, R], ['D', 409, 886, O], ['D', 657, 889, '#fff09a'],
  ['D', 819, 860, S], ['D', 843, 817, Y], ['D', 670, 998, R], ['D', 614, 1071, Y], ['D', 701, 1056, O], ['D', 764, 1061, R], ['D', 708, 1118, R], ['D', 657, 1229, S],
]
const events = pts.map(([s, x, y, c, k]) => { const [px, py] = at(s, x, y); return { x: px, y: py, c, k: k === 'b' ? '#2b10ff' : '#ff0050' } })
const places: [string, number, number, number][] = [
  ['Fuencarral - El Pardo', 1789, 1030, 248], ['Hortaleza', 2189, 1271, 115], ['Barajas', 2387, 1297, 84], ['Chamartín', 2067, 1363, 124], ['Moncloa - Aravaca', 1792, 1408, 217], ['San Blas - Canillejas', 2243, 1452, 232],
  ['Salamanca', 2077, 1467, 125], ['Centro', 2007, 1515, 84], ['Retiro', 2097, 1538, 71], ['Moratalaz', 2175, 1557, 118], ['Arganzuela', 2006, 1588, 133], ['Puente de Vallecas', 2067, 1643, 226],
  ['Carabanchel', 1880, 1660, 152], ['Latina', 1799, 1635, 70], ['Vicálvaro', 2378, 1608, 108], ['Villa de Vallecas', 2212, 1773, 187], ['Villaverde', 2018, 1800, 116],
]

/* ---------- annotations ---------- */
const notes: [string, number, number, number][] = [
  ['acciones específicas según capítulos', 384, 379, 838], ['mover y zooms', 1421, 364, 346], ['seleccionar', 1513, 435, 262], ['edición de elementos de capa', 650, 661, 673],
  ['importar', 29, 706, 206], ['archivos', 29, 766, 197], ['según', 29, 826, 137], ['tipos de', 29, 886, 186], ['formato', 29, 946, 192], ['gestión', 29, 1265, 170], ['de capas', 29, 1325, 202],
  ['nivel actual', 2095, 2149, 271], ['de zoom', 2095, 2209, 192], ['rotación', 2579, 2149, 193], ['sobre el', 2579, 2209, 183], ['norte', 2579, 2269, 125], ['sistema de', 2939, 2149, 248], ['coordenadas', 2939, 2209, 296], ['actual', 2939, 2269, 146],
]
/* left, top, right, bottom (outer edges) */
const frames: [number, number, number, number][] = [
  [271, 433, 1366.5, 497], [629, 484, 1398, 556], [283, 543.5, 1052, 614.5], [1410.5, 484, 1768.5, 556], [253.5, 616, 374, 1161.5], [350, 1149, 879, 1975], [2085, 1924, 2337, 2007.5], [2570, 1924, 2821, 2007.5], [2920, 1924, 3171, 2007.5],
]
const stems = [[357, 353, 433], [1385.5, 325, 490], [1487.5, 409, 490]]
</script>

<template>
  <div class="slide">
    <h1 class="title"><Fit t="interface" :w="418" :s="98" c="#2c3e56" b f="'Open Sans','Noto Sans',sans-serif" /></h1>

    <div class="window">
      <header class="titlebar">
        <svg class="logo" viewBox="0 0 36 36" v-html="icons.qgis" />
        <Fit t="QGIS 2.18.13" :w="127" :s="23" f="'Open Sans',sans-serif" />
        <svg class="controls" width="220" height="24" fill="none" stroke="#111" stroke-width="2">
          <path d="M13 13h20M104 8h12v12h-12zM107 8V5h12v12h-3M194 4l18 17M212 4l-18 17" />
        </svg>
      </header>

      <nav class="menubar">
        <span v-for="m in menu" :key="m[0]" :style="{ marginRight: m[2] + 'px' }"><Fit :t="m[0]" :w="m[1]" /></span>
      </nav>

      <div v-for="(row, r) in [row1, row2]" :key="r" class="toolbar">
        <template v-for="(n, i) in row" :key="i">
          <i v-if="n === '|'" class="grip" />
          <i v-else-if="n === 'v' || n === 'x'" class="drop" :class="{ off: n === 'x' }" />
          <span v-else class="tool" :class="{ pressed: n === 'touch' }"><svg viewBox="0 0 36 36" v-html="icons[n]" /></span>
        </template>
      </div>

      <main class="main">
        <aside class="strip">
          <i class="hgrip" />
          <div v-for="s in side" :key="s[0]" class="sidetool">
            <svg viewBox="0 0 36 36" v-html="icons[s[0]]" /><i v-if="s[1]" class="drop" />
          </div>
          <i class="hgrip low" />
          <svg class="form" viewBox="0 0 36 36" v-html="icons.form" />
        </aside>

        <section class="docks">
          <div class="bookmarks">
            <div class="dockhead">
              <i class="hgrip" /><Fit t="Spatial Bookmarks Panel" :w="202" /><i class="hgrip" />
              <svg class="dockbtns" viewBox="0 0 48 23"><g fill="#f6f6f6" stroke="#666" stroke-width="1.400"><rect x="1" y="1" width="20" height="21" rx="3" /><rect x="26" y="1" width="20" height="21" rx="3" /></g><path d="M6 10h7v7H6zM9 10V6h8v8h-4M31 6l10 11M41 6L31 17" fill="none" stroke="#000" stroke-width="2" /></svg>
            </div>
            <div class="docktools">
              <svg v-for="n in ['zoombk', 'bookadd', 'redtrash', 'share']" :key="n" viewBox="0 0 36 36" v-html="icons[n]" />
            </div>
            <div class="grid">
              <div class="cols">
                <span class="c1"><Fit t="Name" :w="50" /></span><span><Fit t="Project" :w="61" /></span><span><Fit t="xMin" :w="40" /></span><span class="c4"><Fit t="yMin" :w="40" /></span>
              </div>
              <div class="void" />
              <div class="scroll">
                <b class="sb first"><i class="tri l" /></b><b class="thumb" /><b class="track" /><b class="sb"><i class="tri l" /></b><b class="sb"><i class="tri r" /></b>
              </div>
            </div>
          </div>

          <div class="layers">
            <div class="dockhead">
              <i class="hgrip" /><Fit t="Layers Panel" :w="104" /><i class="hgrip" />
              <svg class="dockbtns" viewBox="0 0 48 23"><g fill="#f6f6f6" stroke="#666" stroke-width="1.400"><rect x="1" y="1" width="20" height="21" rx="3" /><rect x="26" y="1" width="20" height="21" rx="3" /></g><path d="M6 10h7v7H6zM9 10V6h8v8h-4M31 6l10 11M41 6L31 17" fill="none" stroke="#000" stroke-width="2" /></svg>
            </div>
            <div class="docktools lt">
              <template v-for="n in ['brush', 'group', 'eye', 'funnel', 'epsf', 'v', 'expand', 'collapse', 'remove']" :key="n">
                <i v-if="n === 'v'" class="drop" /><svg v-else viewBox="0 0 36 36" v-html="icons[n]" />
              </template>
            </div>
            <div class="tree">
              <svg class="twigs" width="90" height="180" fill="none" stroke="#999" stroke-width="1.300" stroke-dasharray="1.500 1.500"><path d="M15 2v168h13M21 17h10M46 34v77M46 48h14M46 79h14M46 110h14" /></svg>
              <div class="node"><Expander open /><Check on /><svg class="sym" viewBox="0 0 28 28" fill="#ccc" stroke="#888"><circle cx="8" cy="11" r="2.500" /><circle cx="21" cy="5" r="2.500" /><circle cx="4" cy="24" r="2.500" /></svg><Fit t="madrid_206974-0-agenda-eventos-c..." :w="388" :s="18.500" b f="'DejaVu Sans',sans-serif" /></div>
              <div class="node kid"><Check on /><svg class="mark" viewBox="0 0 16 16"><path d="M8 0v16M0 8h16" stroke="#2b10ff" stroke-width="3" /></svg><Fit t="0" :w="10" :s="18" /></div>
              <div class="node kid"><Check on /><svg class="mark" viewBox="0 0 16 16"><path d="M8 0v16M0 8h16" stroke="#ff0050" stroke-width="3" /></svg><Fit t="1" :w="10" :s="18" /></div>
              <div class="node kid"><Check /><svg class="mark" viewBox="0 0 16 16"><circle cx="8" cy="8" r="7.500" fill="#d4440e" /></svg></div>
              <div class="node sel"><Expander /><Check on /><svg class="sym" viewBox="0 0 28 28" fill="#7aa6d4" stroke="#5d87b3"><circle cx="8" cy="11" r="2.500" /><circle cx="21" cy="5" r="2.500" /><circle cx="4" cy="24" r="2.500" /></svg><Fit t="madrid_206974-0-agenda-eventos-c..." :w="388" :s="18.500" b u c="#fff" f="'DejaVu Sans',sans-serif" /></div>
              <div class="node last"><Check on /><i class="swatch" /><Fit t="DISTRITOS_20151002" :w="214" :s="18.500" b f="'DejaVu Sans',sans-serif" /></div>
            </div>
          </div>
        </section>

        <div class="splitter" />

        <svg class="canvas" viewBox="885 618 2343 1321" width="2343" height="1321">
          <polygon :points="outline" fill="#a6cee3" stroke="#71868f" stroke-width="1.600" stroke-linejoin="round" />
          <polyline v-for="(b, i) in borders" :key="i" :points="b" fill="none" stroke="#4d6069" stroke-width="1.600" />
          <circle v-for="(e, i) in events" :key="'c' + i" :cx="e.x" :cy="e.y" r="14.600" :fill="e.c" />
          <path v-for="(e, i) in events" :key="'p' + i" :d="`M${e.x} ${e.y - 7.500}v15M${e.x - 7.500} ${e.y}h15`" :stroke="e.k" stroke-width="2.900" />
          <text v-for="p in places" :key="p[0]" :x="p[1]" :y="p[2]" :textLength="p[3]" lengthAdjust="spacingAndGlyphs" class="place">{{ p[0] }}</text>
        </svg>
      </main>

      <footer class="status">
        <Fit t="Coordinate" :w="94" /><span class="field coord"><Fit t="407129,4494168" :w="148" /></span>
        <svg class="si mouse" viewBox="0 0 36 36" v-html="icons.mouse" />
        <Fit t="Scale" :w="47" /><span class="field scale"><Fit t="1:212,513" :w="90" /><i class="cb"><i class="drop sm" /></i></span>
        <svg class="si lock" viewBox="0 0 36 36" v-html="icons.lock" />
        <Fit t="Magnifier" :w="81" /><span class="field magn"><Fit t="100%" :w="51" /><i class="cb spin"><svg width="12" height="24" viewBox="0 0 12 24"><path d="M6 1l5 7H1zM6 23l5-7H1z" /></svg></i></span>
        <Fit t="Rotation" :w="72" /><span class="field rot"><Fit t="0.0" :w="26" /><i class="cb spin"><svg width="12" height="24" viewBox="0 0 12 24"><path d="M6 1l5 7H1zM6 23l5-7H1z" /></svg></i></span>
        <span class="render"><Check on /></span><Fit t="Render" :w="62" />
        <svg class="si crs" viewBox="0 0 36 36" v-html="icons.crs" /><Fit t="EPSG:3042 (OTF)" :w="155" />
        <svg class="si bub" viewBox="0 0 36 36" v-html="icons.bubble" />
      </footer>

      <footer class="taskbar">
        <span class="start"><svg viewBox="0 0 36 36" width="42" height="38" v-html="icons.win" /></span>
        <span class="start tv"><svg viewBox="0 0 36 36" width="44" height="40" v-html="icons.taskview" /></span>
        <span v-for="(t, i) in tasks" :key="i" class="task" :class="{ run: running.has(i), active: i === 17 }">
          <svg viewBox="0 0 36 36" :width="t[1]" :height="t[1]" v-html="icons[t[0]]" />
        </span>
        <div class="tray">
          <svg class="t-people" viewBox="0 0 36 36" v-html="icons.people" />
          <svg class="t-caret" viewBox="0 0 36 36" v-html="icons.caret" />
          <svg class="t-bat" viewBox="0 0 36 36" v-html="icons.battery" />
          <svg class="t-cloud" viewBox="0 0 36 36" v-html="icons.cloud" />
          <svg class="t-wifi" viewBox="0 0 36 36" v-html="icons.wifi" />
          <svg class="t-snd" viewBox="0 0 36 36" v-html="icons.sound" />
          <Fit t="CAT" :w="40" :s="23" c="#fff" f="'Open Sans',sans-serif" />
          <div class="clock"><Fit t="12:54" :w="53" :s="23" c="#fff" f="'Open Sans',sans-serif" /><Fit t="02/07/2018" :w="117" :s="23" c="#fff" f="'Open Sans',sans-serif" /></div>
          <svg class="t-not" viewBox="0 0 36 36" v-html="icons.notif" />
        </div>
      </footer>
    </div>

    <svg class="overlay" width="3508" height="2480" viewBox="0 0 3508 2480">
      <rect v-for="(f, i) in frames" :key="i" :x="f[0] + 6.300" :y="f[1] + 6.300" :width="f[2] - f[0] - 12.600" :height="f[3] - f[1] - 12.600" fill="none" stroke="#2c3e56" stroke-width="12.600" />
      <rect v-for="(s, i) in stems" :key="'s' + i" :x="s[0]" :y="s[1]" width="12.600" :height="s[2] - s[1]" fill="#2c3e56" />
      <text v-for="(n, i) in notes" :key="'n' + i" :x="n[1]" :y="n[2]" :textLength="n[3]" lengthAdjust="spacingAndGlyphs" class="note">{{ n[0] }}</text>
    </svg>
  </div>
</template>

<style>
body { margin: 0; background: #fff; }
</style>

<style scoped>
.slide { position: relative; box-sizing: border-box; width: 3508px; height: 2480px; background: #fff; border: 2px solid #2c3e56; padding: 102px 0 0 276px; overflow: hidden; font-family: "DejaVu Sans", sans-serif; }
.title { box-sizing: border-box; margin: 0; width: 539px; height: 138px; background: #0ff; padding: 18px 0 0 43px; font-style: italic; }
.overlay { position: absolute; left: -2px; top: -2px; pointer-events: none; }
.note { font: italic 700 47px "Open Sans", "Noto Sans", sans-serif; fill: #2c3e56; }
.place { font: 26px "Open Sans", "Noto Sans", sans-serif; fill: #fff; }

.window { width: 2953px; margin-top: 163px; display: flex; flex-direction: column; }
.titlebar { height: 50px; display: flex; align-items: center; padding: 2px 33px 0 8px; box-sizing: border-box; }
.logo { width: 24px; height: 36px; margin-right: 9px; }
.controls { margin-left: auto; }
.menubar { height: 38px; background: #efefef; display: flex; align-items: center; padding: 3px 0 0 16px; box-sizing: border-box; }
.toolbar { box-sizing: border-box; height: 60px; border-top: 3px solid #b9b9b9; background: #efefef; display: flex; align-items: center; padding: 0 0 2px 17px; }
.toolbar::before { content: ""; width: 8px; margin-left: -8px; height: 44px; background: radial-gradient(circle 2px, #fff 95%, transparent) 0 0/8px 8px, radial-gradient(circle 2px, #c8c8c8 95%, transparent) 4px 4px/8px 8px; }
.tool { width: 53.8px; height: 46px; display: flex; align-items: center; justify-content: center; flex: none; }
.tool svg { width: 36px; height: 36px; overflow: visible; }
.pressed { background: linear-gradient(#c9c9c9, #dcdcdc); box-shadow: inset 0 0 0 1.500px #8e8e8e; border-radius: 3px; }
.grip { width: 22px; height: 44px; flex: none; background: radial-gradient(circle 2px, #fff 95%, transparent) 0 0/8px 8px, radial-gradient(circle 2px, #c8c8c8 95%, transparent) 4px 4px/8px 8px; background-clip: content-box; box-sizing: border-box; padding: 0 6.500px; }
.drop { width: 23px; height: 8px; flex: none; position: relative; }
.drop::after { content: ""; display: block; margin-left: 3px; border: 7.500px solid transparent; border-top: 8px solid #000; border-bottom: 0; width: 0; }
.drop.off::after { border-top-color: #999; }
.hgrip { height: 9px; flex: 1; background: radial-gradient(circle 2px, #fff 95%, transparent) 0 0/8px 9px, radial-gradient(circle 2px, #c8c8c8 95%, transparent) 4px 4px/8px 9px; }

.main { box-sizing: border-box; height: 1328px; border-top: 3px solid #b9b9b9; background: #efefef; display: flex; }
.strip { width: 84px; display: flex; flex-direction: column; padding: 13px 0 0 5px; box-sizing: border-box; }
.strip .hgrip { flex: none; width: 76px; }
.sidetool { height: 52.400px; display: flex; align-items: center; padding-left: 7px; gap: 9px; flex: none; }
.sidetool:nth-child(2) { margin-top: -6px; }
.sidetool svg { width: 37px; height: 37px; flex: none; overflow: visible; }
.sidetool .drop { width: 16px; margin-top: -4px; }
.strip .low { margin-top: 13px; }
.form { width: 37px; height: 36px; margin: 6px 0 0 18px; flex: none; }
.docks { width: 515px; display: flex; flex-direction: column; }
.bookmarks { height: 546px; display: flex; flex-direction: column; flex: none; }
.dockhead { height: 30px; display: flex; align-items: center; gap: 14px; padding: 2px 5px 0 5px; box-sizing: border-box; }
.dockbtns { width: 48px; height: 23px; flex: none; margin: -4px 0 0 -8px; }
.docktools { height: 51px; display: flex; align-items: center; gap: 17px; padding-left: 13px; }
.docktools svg { width: 25px; height: 25px; overflow: visible; }
.lt { height: 49px; gap: 18px; box-sizing: border-box; padding-bottom: 1px; }
.lt svg { width: 24px; height: 24px; }
.lt .drop { width: 18px; margin: 0 -6px 0 -8px; }
.grid { width: 510px; box-sizing: border-box; border: 2px solid #aaa; border-left: 0; height: 451px; display: flex; flex-direction: column; background: #fff; }
.cols { height: 42px; box-sizing: border-box; display: flex; border-top: 1.500px solid #777; border-bottom: 2px solid #888; background: linear-gradient(#fdfdfd, #e6e6e6); overflow: hidden; }
.cols span { width: 154.300px; box-sizing: border-box; padding: 1px 0 0 8px; display: flex; align-items: center; border-right: 3px solid #888; flex: none; }
.cols .c1 { width: 158px; padding-left: 12px; }
.cols .c4 { width: 41px; border: 0; padding-left: 6px; overflow: hidden; flex: 1; }
.void { flex: 1; }
.scroll { height: 25px; display: flex; }
.scroll b { box-sizing: border-box; border: 1.500px solid #888; border-radius: 3px; background: linear-gradient(#fff, #e2e2e2); display: flex; align-items: center; justify-content: center; }
.scroll .sb { width: 24px; }
.scroll .first { width: 29px; padding-left: 6px; }
.scroll .thumb { width: 175px; background: radial-gradient(circle 1.500px, #bbb 90%, transparent) 0 0/6px 6px content-box, linear-gradient(#fff, #e2e2e2); padding: 3px 72px; }
.scroll .track { flex: 1; border: 0; background: #f0f0f0; }
.tri { border: 6px solid transparent; }
.tri.l { border-right: 7px solid #000; border-left: 0; }
.tri.r { border-left: 7px solid #000; border-right: 0; }
.tree { position: relative; height: 700px; margin-left: 2px; width: 512px; box-sizing: border-box; border: 2px solid #3f97f2; background: #fff; overflow: hidden; padding-top: 1px; }
.twigs { position: absolute; left: -5px; top: 0; margin-left: 6px; }
.node { height: 30.500px; display: flex; align-items: center; padding-left: 7px; position: relative; }
.sym { width: 28px; height: 28px; margin: 0 12px 0 10px; flex: none; }
.kid { padding-left: 66px; }
.mark { width: 16px; height: 16px; margin: 0 18px 0 17px; flex: none; }
.sel { background: #3399ff; }
.last { padding-left: 35px; }
.swatch { width: 28px; height: 27px; box-sizing: border-box; background: #a6cee3; border: 1.500px solid #8aa; margin: 0 10px; flex: none; }
.splitter { width: 6px; background: #efefef; }
.canvas { border: 2px solid #b4b4b4; background: #fff; box-sizing: content-box; flex: none; }

.status { height: 53px; background: #efefef; display: flex; align-items: center; padding: 3px 0 0 1282px; box-sizing: border-box; }
.field { box-sizing: border-box; height: 33px; border: 2px solid #bbb; border-radius: 3px; background: #fff; display: flex; align-items: center; margin-left: 6px; flex: none; overflow: hidden; padding-left: 5px; }
.coord { width: 392px; justify-content: center; padding: 0; }
.scale { width: 149px; }
.magn { width: 120px; margin-left: 7px; }
.rot { width: 122px; margin-left: 15px; }
.cb { margin-left: auto; width: 24px; height: 100%; border-left: 1.500px solid #bbb; background: linear-gradient(#fff, #eee); display: flex; align-items: center; box-sizing: border-box; padding-left: 2px; }
.cb .sm::after { border-width: 6px 5.500px 0; }
.spin { padding-left: 5px; }
.si { width: 34px; height: 34px; flex: none; }
.mouse { margin: 0 19px 0 8px; }
.lock { width: 26px; margin: 0 9px 0 25px; }
.magn + svg { margin-left: 18px; }
.render { margin: 0 11px 0 10px; flex: none; }
.crs { width: 30px; height: 30px; margin: 0 7px 0 28px; }
.bub { width: 33px; margin-left: 37px; }

.taskbar { height: 77px; background: #1c160e; display: flex; align-items: stretch; }
.taskbar > span { display: flex; align-items: center; justify-content: center; flex: none; box-sizing: border-box; }
.start { width: 92px; }
.tv { width: 99px; padding-right: 6px; }
.task { width: 93px; margin-right: 2.300px; background: linear-gradient(#76b9ed, #76b9ed) center bottom/0 5px no-repeat; }
.run { background-size: 79px 5px; }
.active { background-color: #4d463f; background-size: 93px 5px; }
.tray { display: flex; align-items: center; margin-left: auto; width: 604px; flex: none; }
.tray svg[class] { height: 34px; flex: none; }
.t-people { width: 31px; margin-right: 40px; }
.t-caret { width: 28px; margin-right: 17px; }
.t-bat { width: 31px; margin-right: 14px; }
.t-cloud { width: 32px; margin-right: 19px; }
.t-wifi { width: 26px; margin-right: 14px; }
.t-snd { width: 33px; margin-right: 20px; }
.clock { display: flex; flex-direction: column; align-items: center; gap: 13px; margin: 0 34px 0 28px; }
.t-not { width: 34px; overflow: visible; margin-top: -6px; }
</style>
